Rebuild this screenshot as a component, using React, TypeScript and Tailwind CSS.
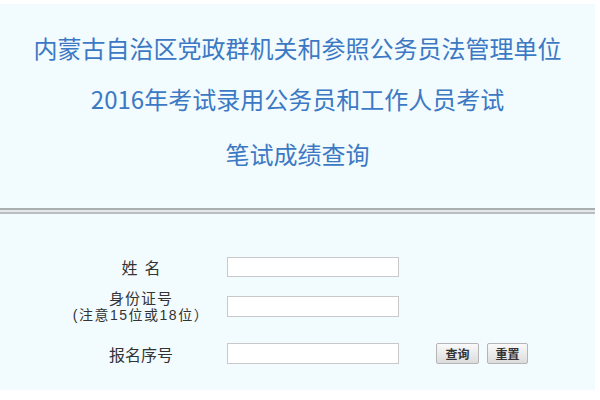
export default function App() {
  const font = { fontFamily: '"SimSun", "Noto Sans CJK SC", sans-serif' };
  const labelFont = { fontFamily: '"Liberation Sans", "Noto Sans CJK SC", sans-serif' };
  return (
    <div className="h-[400px] w-[600px] bg-white pt-[4px]" style={font}>
      <div className="mr-[5px] h-[386px] bg-[#f2fbfe]">
        <div className="flex h-[204px] flex-col items-center pt-[29px] text-[24px] text-[#3c79c4]">
          <div className="leading-[30px]">内蒙古自治区党政群机关和参照公务员法管理单位</div>
          <div className="mt-[21px] leading-[30px]">2016年考试录用公务员和工作人员考试</div>
          <div className="mt-[25px] leading-[30px]">笔试成绩查询</div>
        </div>
        <div className="h-[2px] bg-[#a9aeb0]" />
        <div className="h-[2px] bg-[#e3e7e8]" />
        <div className="h-[2px] bg-[#b9bec0]" />

        <div className="flex flex-col pt-[43px] text-[16px] text-[#333]">
          <div className="flex h-[20px] items-center">
            <div className="w-[227px] pl-[71px]">
              <div className="w-[140px] text-center">姓&nbsp;&nbsp;名</div>
            </div>
            <input className="h-[20px] w-[172px] border border-[#c9c9c9] bg-white" />
          </div>
          <div className="mt-[19px] flex h-[21px] items-center">
            <div className="w-[227px] pl-[71px]" style={labelFont}>
              <div className="w-[140px] text-center text-[15px] leading-[17px] tracking-[1px]">身份证号</div>
              <div className="w-[140px] whitespace-nowrap text-center text-[14px] leading-[16px] tracking-[1.5px]">(注意15位或18位）</div>
            </div>
            <input className="h-[21px] w-[172px] border border-[#c9c9c9] bg-white" />
          </div>
          <div className="mt-[26px] flex h-[21px] items-center">
            <div className="w-[227px] pl-[71px]">
              <div className="w-[140px] text-center">报名序号</div>
            </div>
            <input className="h-[21px] w-[172px] border border-[#c9c9c9] bg-white" />
            <button className="ml-[37px] h-[21px] w-[43px] rounded-[2px] border border-[#b5b5b5] bg-gradient-to-b from-[#fafafa] to-[#dcdcdc] text-[12px] font-bold text-[#333]">
              查询
            </button>
            <button className="ml-[8px] h-[21px] w-[41px] rounded-[2px] border border-[#b5b5b5] bg-gradient-to-b from-[#fafafa] to-[#dcdcdc] text-[12px] font-bold text-[#333]">
              重置
            </button>
          </div>
        </div>
      </div>
    </div>
  );
}
